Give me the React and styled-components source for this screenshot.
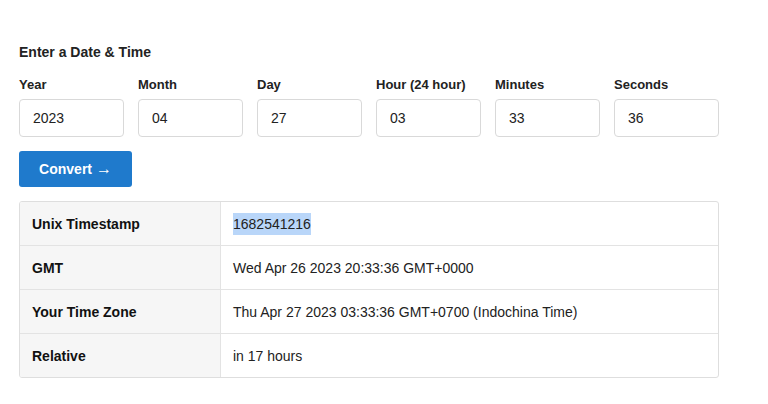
import React, { useState } from "react";
import styled, { createGlobalStyle } from "styled-components";

const GlobalStyle = createGlobalStyle`
  body {
    margin: 0;
    background: #ffffff;
    font-family: "Liberation Sans", Arial, Helvetica, sans-serif;
    color: #222222;
  }
`;

const Page = styled.div`
  padding: 44px 19px 20px 19px;
  width: 700px;
`;

const Heading = styled.h2`
  margin: 0 0 17px 0;
  font-size: 14px;
  line-height: 16px;
  font-weight: 700;
  color: #222;
`;

const FieldRow = styled.div`
  display: grid;
  grid-template-columns: repeat(6, 105px);
  column-gap: 14px;
`;

const Field = styled.label`
  display: flex;
  flex-direction: column;
  gap: 6px;
`;

const FieldLabel = styled.span`
  font-size: 13px;
  line-height: 16px;
  font-weight: 700;
  color: #222;
`;

const Input = styled.input`
  box-sizing: border-box;
  width: 105px;
  height: 38px;
  padding: 0 13px;
  border: 1px solid #d9d9d9;
  border-radius: 4px;
  font-family: inherit;
  font-size: 14px;
  color: #222;
  background: #fff;
  outline: none;
`;

const Button = styled.button`
  margin-top: 14px;
  width: 113px;
  height: 36px;
  border: none;
  border-radius: 3px;
  background: #1f7acc;
  color: #fff;
  font-family: inherit;
  font-size: 14px;
  font-weight: 700;
  cursor: pointer;
`;

const Arrow = styled.span`
  font-size: 16px;
  line-height: 1;
`;

const Table = styled.div`
  margin-top: 14px;
  width: 700px;
  border: 1px solid #dedede;
  border-radius: 3px;
  overflow: hidden;
  box-sizing: border-box;
`;

const Row = styled.div`
  display: grid;
  grid-template-columns: 201px 1fr;
  height: ${(p) => (p.first ? "43px" : "44px")};
  border-top: ${(p) => (p.first ? "none" : "1px solid #e3e3e3")};
  box-sizing: border-box;
`;

const KeyCell = styled.div`
  display: flex;
  align-items: center;
  padding-left: 12px;
  background: #f6f6f6;
  border-right: 1px solid #e3e3e3;
  font-size: 14px;
  font-weight: 700;
  color: #111;
`;

const ValueCell = styled.div`
  display: flex;
  align-items: center;
  padding-left: 12px;
  font-size: 14px;
  color: #222;
`;

const Selected = styled.span`
  background: #b9d6f9;
  padding: 3px 0;
`;

const fields = [
  ["Year", "2023"],
  ["Month", "04"],
  ["Day", "27"],
  ["Hour (24 hour)", "03"],
  ["Minutes", "33"],
  ["Seconds", "36"],
];

const results = [
  ["Unix Timestamp", <Selected key="s">1682541216</Selected>],
  ["GMT", "Wed Apr 26 2023 20:33:36 GMT+0000"],
  ["Your Time Zone", "Thu Apr 27 2023 03:33:36 GMT+0700 (Indochina Time)"],
  ["Relative", "in 17 hours"],
];

const App = () => {
  const [values, setValues] = useState(fields.map((f) => f[1]));

  return (
    <Page>
      <GlobalStyle />
      <Heading>Enter a Date &amp; Time</Heading>
      <FieldRow>
        {fields.map(([label], i) => (
          <Field key={label}>
            <FieldLabel>{label}</FieldLabel>
            <Input
              value={values[i]}
              onChange={(e) => {
                const next = [...values];
                next[i] = e.target.value;
                setValues(next);
              }}
            />
          </Field>
        ))}
      </FieldRow>
      <Button>
        Convert <Arrow>→</Arrow>
      </Button>
      <Table>
        {results.map(([key, value], i) => (
          <Row key={key} first={i === 0}>
            <KeyCell>{key}</KeyCell>
            <ValueCell>{value}</ValueCell>
          </Row>
        ))}
      </Table>
    </Page>
  );
};

export default App;
